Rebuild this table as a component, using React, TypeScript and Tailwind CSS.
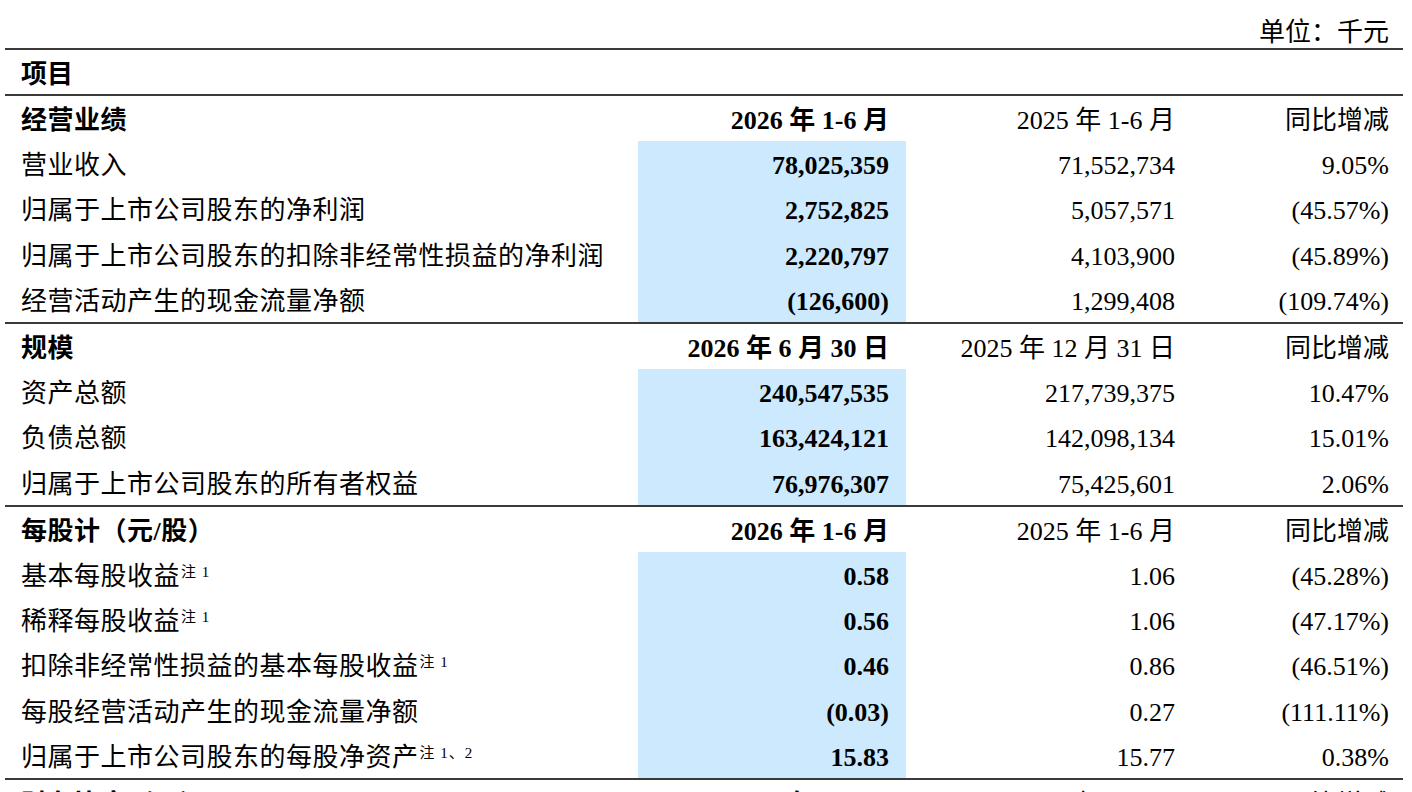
import React from 'react'

type Row = { label: React.ReactNode; a: string; b: string; c: string }
type Section = { title: string; ha: string; hb: string; hc: string; rows: Row[] }

const note = (t: string) => (
  <sup className="text-[15px] relative -top-[5px] ml-[1px] tracking-[1px]">注{t}</sup>
)

const sections: Section[] = [
  {
    title: '经营业绩',
    ha: '2026 年 1-6 月',
    hb: '2025 年 1-6 月',
    hc: '同比增减',
    rows: [
      { label: '营业收入', a: '78,025,359', b: '71,552,734', c: '9.05%' },
      { label: '归属于上市公司股东的净利润', a: '2,752,825', b: '5,057,571', c: '(45.57%)' },
      { label: '归属于上市公司股东的扣除非经常性损益的净利润', a: '2,220,797', b: '4,103,900', c: '(45.89%)' },
      { label: '经营活动产生的现金流量净额', a: '(126,600)', b: '1,299,408', c: '(109.74%)' },
    ],
  },
  {
    title: '规模',
    ha: '2026 年 6 月 30 日',
    hb: '2025 年 12 月 31 日',
    hc: '同比增减',
    rows: [
      { label: '资产总额', a: '240,547,535', b: '217,739,375', c: '10.47%' },
      { label: '负债总额', a: '163,424,121', b: '142,098,134', c: '15.01%' },
      { label: '归属于上市公司股东的所有者权益', a: '76,976,307', b: '75,425,601', c: '2.06%' },
    ],
  },
  {
    title: '每股计（元/股）',
    ha: '2026 年 1-6 月',
    hb: '2025 年 1-6 月',
    hc: '同比增减',
    rows: [
      { label: <>基本每股收益{note(' 1')}</>, a: '0.58', b: '1.06', c: '(45.28%)' },
      { label: <>稀释每股收益{note(' 1')}</>, a: '0.56', b: '1.06', c: '(47.17%)' },
      { label: <>扣除非经常性损益的基本每股收益{note(' 1')}</>, a: '0.46', b: '0.86', c: '(46.51%)' },
      { label: '每股经营活动产生的现金流量净额', a: '(0.03)', b: '0.27', c: '(111.11%)' },
      { label: <>归属于上市公司股东的每股净资产{note(' 1、2')}</>, a: '15.83', b: '15.77', c: '0.38%' },
    ],
  },
  {
    title: '财务比率（%）',
    ha: '2026 年 1-6 月',
    hb: '2025 年 1-6 月',
    hc: '同比增减',
    rows: [],
  },
]

function Line() {
  return <div className="h-[2px] bg-[#3a3a3a]" />
}

function Cells({ label, a, b, c, head, blue }: { label: React.ReactNode; a: string; b: string; c: string; head?: boolean; blue?: boolean }) {
  return (
    <div className="grid grid-cols-[633px_268px_284px_213px] h-[45.2px] items-stretch">
      <div className={`flex items-center pl-[16px] pt-[5px] whitespace-nowrap tracking-[0.5px] ${head ? 'font-bold' : ''}`}>{label}</div>
      <div className={`flex items-center justify-end pr-[17px] pt-[5px] font-bold whitespace-nowrap ${blue ? 'bg-[#cce9fd]' : ''}`}>{a}</div>
      <div className="flex items-center justify-end pr-[15px] pt-[5px] whitespace-nowrap">{b}</div>
      <div className="flex items-center justify-end pr-[14px] pt-[5px] whitespace-nowrap">{c}</div>
    </div>
  )
}

export default function App() {
  return (
    <div className="h-[792px] overflow-hidden bg-white text-black text-[26px] leading-none font-['Liberation_Serif','Noto_Sans_CJK_SC',serif]">
      <div className="ml-[5px] w-[1398px]">
        <div className="h-[48px] flex items-center justify-end pt-[18px] pr-[14px]">单位：千元</div>
        <Line />
        <div className="h-[44px] flex items-center pl-[16px] pt-[5px] font-bold">项目</div>
        {sections.map((s) => (
          <div key={s.title}>
            <Line />
            <Cells label={s.title} a={s.ha} b={s.hb} c={s.hc} head />
            {s.rows.map((r, i) => (
              <Cells key={i} label={r.label} a={r.a} b={r.b} c={r.c} blue />
            ))}
          </div>
        ))}
      </div>
    </div>
  )
}
